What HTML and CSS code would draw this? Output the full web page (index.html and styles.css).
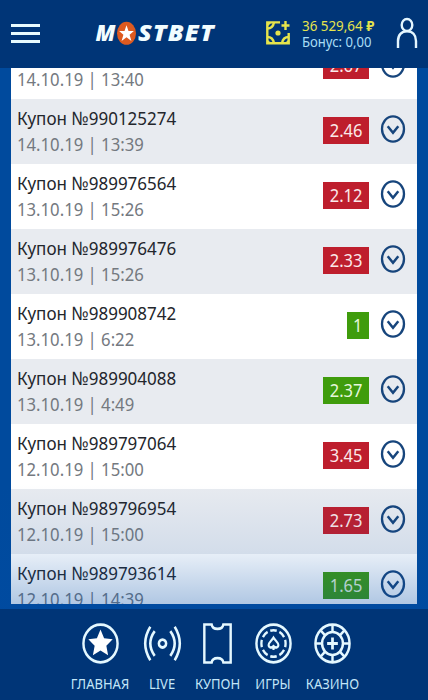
FILE: index.html
```
<!DOCTYPE html>
<html lang="ru">
<head>
    <meta charset="UTF-8">
    <meta name="viewport" content="width=device-width, initial-scale=1">
    <title>Mostbet</title>

    <link rel="stylesheet" href="styles.css">
</head>
<body>

<svg class="defs" width="0" height="0">
    <symbol id="open" viewBox="0 0 26 28">
        <ellipse cx="13" cy="14" rx="11" ry="12.7" fill="none" stroke="currentColor" stroke-width="2.3"/>
        <path d="M7.700 11.300l5.300 6.400 5.300-6.400" fill="none" stroke="currentColor" stroke-width="2.500"/>
    </symbol>
</svg>

<header>
    <div class="menu"><i></i><i></i><i></i></div>

    <svg class="logo" width="124" height="28" viewBox="0 0 124 28">
        <text x="1.500" y="22" textLength="20" lengthAdjust="spacingAndGlyphs">M</text>
        <ellipse cx="32.500" cy="14.300" rx="9.500" ry="11.500" fill="#dd5a20"/>
        <path d="M32.500 6.300l2 5.600h5.400l-4.300 3.800 1.800 6.200-4.900-3.600-4.900 3.600 1.800-6.200-4.300-3.800h5.400z" fill="#fff"/>
        <text class="wide" x="44" y="22" textLength="77" lengthAdjust="spacingAndGlyphs">STBET</text>
    </svg>

    <div class="balance">
        <svg width="26" height="26" viewBox="0 0 26 26">
            <g fill="none" stroke="#e6e44c" stroke-width="2.400">
                <path d="M15 2.400H2.300v20.900h21.400V13"/>
                <path d="M2.300 8.500Q8 8.500 9 2.400M2.300 17Q8 17 9 23.300M23.700 17Q18 17 17 23.300"/>
                <path d="M20.500 1v9M16.500 5.500h8"/>
            </g>
            <g fill="#e6e44c">
                <path d="M2 2h5L2 7zM2 24h5l-5-5zM24 24h-5l5-5z"/>
                <circle cx="13" cy="13" r="2.600"/>
            </g>
        </svg>
        <div class="sums">
            <p class="money">36 529,64 <b>₽</b></p>
            <p>Бонус: 0,00</p>
        </div>
    </div>

    <svg class="user" width="22" height="32" viewBox="0 0 22 32">
        <g fill="none" stroke="#e4f6ff" stroke-width="2.400">
            <ellipse cx="11" cy="8" rx="5.300" ry="6"/>
            <path d="M2 31v-7c0-6 3.500-9.800 9-9.800s9 3.800 9 9.800v7"/>
        </g>
    </svg>
</header>

<main>
    <ul>
        <li>
            <div class="info"><p class="date">14.10.19 | 13:40</p></div>
            <span class="odd"><span>2.67</span></span>
            <svg class="open"><use href="#open"/></svg>
        </li>
        <li>
            <div class="info"><p class="name">Купон №990125274</p><p class="date">14.10.19 | 13:39</p></div>
            <span class="odd"><span>2.46</span></span>
            <svg class="open"><use href="#open"/></svg>
        </li>
        <li>
            <div class="info"><p class="name">Купон №989976564</p><p class="date">13.10.19 | 15:26</p></div>
            <span class="odd"><span>2.12</span></span>
            <svg class="open"><use href="#open"/></svg>
        </li>
        <li>
            <div class="info"><p class="name">Купон №989976476</p><p class="date">13.10.19 | 15:26</p></div>
            <span class="odd"><span>2.33</span></span>
            <svg class="open"><use href="#open"/></svg>
        </li>
        <li>
            <div class="info"><p class="name">Купон №989908742</p><p class="date">13.10.19 | 6:22</p></div>
            <span class="odd win"><span>1</span></span>
            <svg class="open"><use href="#open"/></svg>
        </li>
        <li>
            <div class="info"><p class="name">Купон №989904088</p><p class="date">13.10.19 | 4:49</p></div>
            <span class="odd win"><span>2.37</span></span>
            <svg class="open"><use href="#open"/></svg>
        </li>
        <li>
            <div class="info"><p class="name">Купон №989797064</p><p class="date">12.10.19 | 15:00</p></div>
            <span class="odd"><span>3.45</span></span>
            <svg class="open"><use href="#open"/></svg>
        </li>
        <li>
            <div class="info"><p class="name">Купон №989796954</p><p class="date">12.10.19 | 15:00</p></div>
            <span class="odd"><span>2.73</span></span>
            <svg class="open"><use href="#open"/></svg>
        </li>
        <li>
            <div class="info"><p class="name">Купон №989793614</p><p class="date">12.10.19 | 14:39</p></div>
            <span class="odd win"><span>1.65</span></span>
            <svg class="open"><use href="#open"/></svg>
        </li>
    </ul>
    <div class="fade"></div>
</main>

<nav>
    <a class="home">
        <svg viewBox="-20 -20 40 40" preserveAspectRatio="none">
            <circle r="17.500" fill="none" stroke="#e4f8ff" stroke-width="2.500"/>
            <path d="M0-13l3.700 8.200 8.800.9-6.500 6 1.800 8.900L0 6.600-7.800 11-6 2.100l-6.500-6 8.800-.9z" fill="#fff"/>
        </svg>
        <span>ГЛАВНАЯ</span>
    </a>
    <a class="live">
        <svg viewBox="-20 -20 40 40" preserveAspectRatio="none">
            <g fill="none" stroke="#e4f8ff" stroke-width="2.600">
                <circle r="3.700"/>
                <path d="M-8-11.500q-9 11.500 0 23M8-11.500q9 11.500 0 23M-12.500-15.500q-10.500 15.500 0 31M12.500-15.500q10.500 15.500 0 31"/>
            </g>
        </svg>
        <span>LIVE</span>
    </a>
    <a class="coupon">
        <svg viewBox="-20 -20 40 40" preserveAspectRatio="none">
            <path d="M-13.500-17.700h7.500c1 5.500 11 5.500 12 0h7.500v35.400H6c-1-5.500-11-5.500-12 0h-7.500z" fill="none" stroke="#e4f8ff" stroke-width="2.500"/>
        </svg>
        <span>КУПОН</span>
    </a>
    <a class="games">
        <svg viewBox="-20 -20 40 40" preserveAspectRatio="none">
            <g fill="none" stroke="#e4f8ff">
                <circle r="17.500" stroke-width="2.500"/>
                <circle r="12.400" stroke-width="2.400" pathLength="80" stroke-dasharray="7 3" stroke-dashoffset="3.500"/>
                <path d="M0-5.500C2-2.500 5-1 5 1.500S2 4.500 0 2.500C-2 4.500-5 4-5 1.500S-2-2.500 0-5.500zM0 2.500V6" stroke-width="2.200"/>
            </g>
        </svg>
        <span>ИГРЫ</span>
    </a>
    <a class="casino">
        <svg viewBox="-20 -20 40 40" preserveAspectRatio="none">
            <g fill="none" stroke="#e4f8ff" stroke-width="2.500">
                <circle r="17.500"/>
                <circle r="10.700"/>
                <path d="M0-17v7M0 10v7M-17 0h7M10 0h7M-12-12l5 5M12-12l-5 5M-12 12l5-5M12 12l-5-5"/>
                <path d="M0-5.500v11M-5.500 0h11" stroke-width="2.800"/>
            </g>
        </svg>
        <span>КАЗИНО</span>
    </a>
</nav>

</body>
</html>
```
FILE: styles.css
```
* {
    box-sizing: border-box;
}

body {
    margin: 0;
    height: 700px;
    display: grid;
    grid-template-rows: 68px 541px 91px;
    overflow: hidden;
    background-color: #004a9d;
    font-family: "Noto Sans", "Open Sans", sans-serif;
}

p, ul {
    margin: 0;
    padding: 0;
    list-style: none;
}

.defs {
    position: absolute;
}

header {
    display: flex;
    align-items: flex-start;
    background-color: #003577;
}

.menu {
    width: 29px;
    margin: 24px 0 0 11px;
    display: grid;
    gap: 5px;
}

.menu i {
    height: 3px;
    background-color: #e8fbff;
}

.logo {
    margin: 19px 0 0 54px;
    overflow: visible;
}

.logo text {
    font-family: "Open Sans", sans-serif;
    font-size: 22px;
    font-weight: 800;
    font-style: italic;
    fill: #f2fdff;
}

.logo .wide {
    letter-spacing: 1px;
}

.balance {
    width: 127px;
    margin: 17px 0 0 47px;
    display: flex;
    gap: 11px;
}

.balance svg {
    margin-top: 3px;
    flex: none;
}

.sums p {
    height: 16px;
    line-height: 16px;
    font-size: 13.1px;
    white-space: nowrap;
    color: #a9ddf5;
    transform: scaleY(1.1);
}

.sums .money {
    font-size: 13.4px;
    color: #e6e44c;
}

.user {
    margin: 17px 0 0 4px;
}


main {
    position: relative;
    padding: 0 11px 5px;
    overflow: hidden;
}

main ul {
    height: 536px;
    display: flex;
    flex-direction: column;
    overflow: hidden;
}

main li {
    flex: none;
    height: 65px;
    display: flex;
    align-items: flex-start;
    padding: 6px 11px 0 6px;
    background-color: #fff;
}

main li:nth-child(even) {
    background-color: #e8ebf0;
}

/* scrolled half under the header */
main li:first-child {
    margin-top: -34px;
}

main li:first-child .info {
    padding-top: 26px;
}

.info {
    flex: 1;
}

.info p {
    height: 26px;
    line-height: 26px;
    font-size: 17px;
    color: #23262c;
    transform: scaleY(1.1);
}

.info .date {
    font-size: 16.7px;
    color: #74797f;
}

.odd {
    height: 27px;
    margin: 12px 11px 0 0;
    padding: 0 6.5px;
    line-height: 26px;
    font-size: 16.5px;
    color: #fbe9ea;
    background-color: #be1e2d;
}

.odd span {
    display: block;
    transform: scaleY(1.1);
}

.odd.win {
    color: #e6f7dc;
    background-color: #3f9c0c;
}

.open {
    width: 26px;
    height: 28px;
    margin-top: 10px;
    color: #17457c;
}

/* the list fades to blue above the bottom bar */
.fade {
    position: absolute;
    left: 0;
    right: 0;
    bottom: 0;
    height: 125px;
    background: linear-gradient(rgba(0, 80, 175, 0), rgba(0, 80, 175, 0.09) 55%, rgba(0, 75, 165, 0.33));
}


nav {
    display: flex;
    padding: 13px 0 0 62px;
    background-color: #003577;
}

nav a {
    display: flex;
    flex-direction: column;
    align-items: center;
    color: #c3e6f8;
}

nav svg {
    width: 39px;
    height: 43px;
}

nav span {
    height: 16px;
    margin-top: 10px;
    line-height: 16px;
    font-size: 13px;
    transform: scaleY(1.13);
}

.home {
    width: 76px;
}

.live {
    width: 48px;
}

.coupon {
    width: 63px;
}

.games {
    width: 48px;
}

.casino {
    width: 71px;
}
```
